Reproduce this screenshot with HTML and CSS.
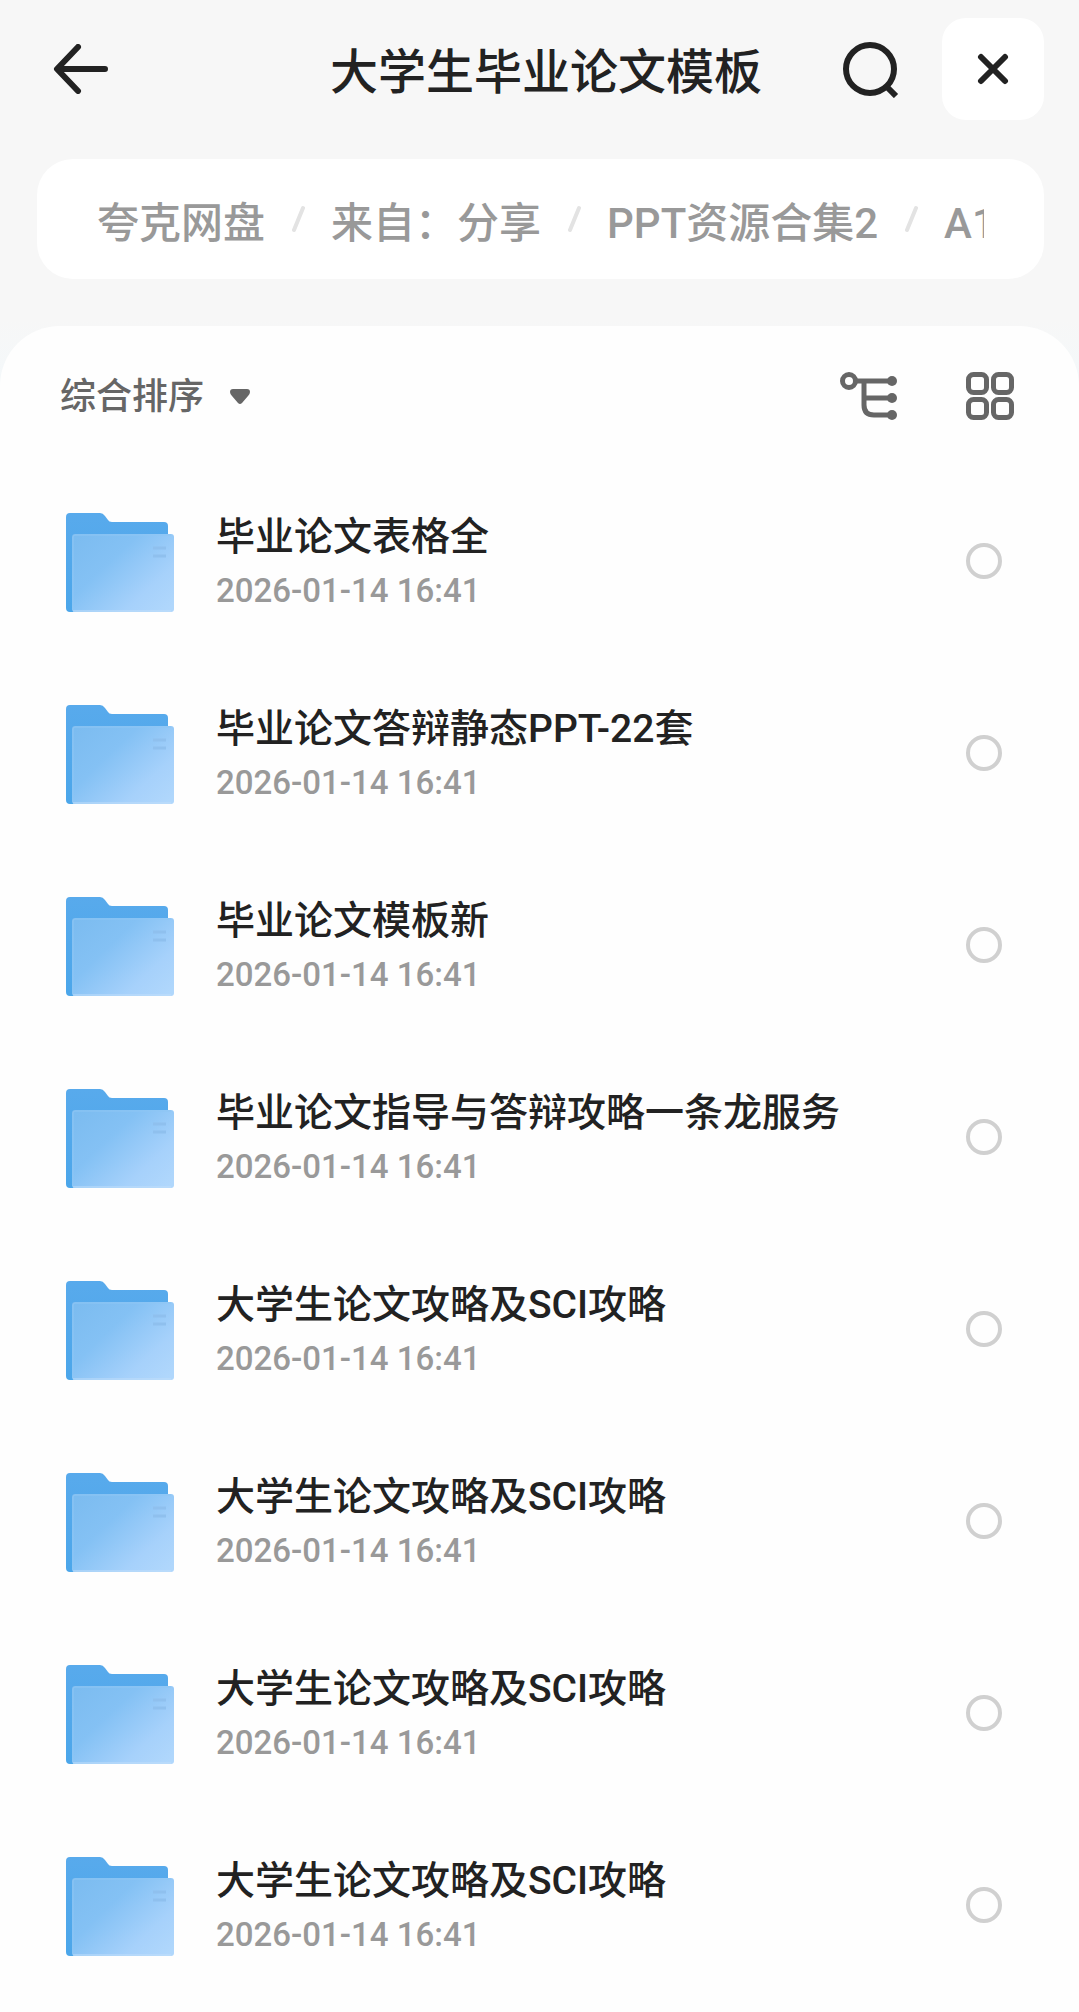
FILE: index.html
```html
<!DOCTYPE html>
<html lang="zh-CN">
<head>
    <meta charset="UTF-8">
    <meta name="viewport" content="width=device-width, initial-scale=1.0">
    <title>大学生毕业论文模板</title>
    <link rel="stylesheet" href="styles.css">
</head>
<body>
    <!-- shared icons -->
    <svg class="sprite" aria-hidden="true">
        <defs>
            <linearGradient id="back" x1="0" y1="0" x2="0" y2="1">
                <stop offset="0" stop-color="#58aaec"/>
                <stop offset="1" stop-color="#4ba6ea"/>
            </linearGradient>
            <linearGradient id="front" x1="0" y1="0.1" x2="1" y2="0.9">
                <stop offset="0" stop-color="#7cbcf0"/>
                <stop offset="0.35" stop-color="#84c1f4"/>
                <stop offset="0.75" stop-color="#a6d1fb"/>
                <stop offset="1" stop-color="#b0d7fc"/>
            </linearGradient>
        </defs>
        <symbol id="folder" viewBox="0 -2 108 101">
            <path fill="url(#back)" d="M4 0H34Q37 0 39 3L42 7Q43 9 46 9H98Q102 9 102 13V99H4Q0 99 0 95V4Q0 0 4 0Z"/>
            <rect x="6" y="21" width="102" height="78" rx="3" fill="url(#front)"/>
            <path d="M7 97V24Q7 22 9 22H105" fill="none" stroke="#8ec6f4" stroke-width="1"/>
            <path d="M7 98H105" stroke="#c2dffa" stroke-width="1"/>
            <path d="M87 35H100M87 43H100" stroke="#8fc0ee" stroke-width="3"/>
        </symbol>
        <symbol id="slash" viewBox="0 0 14 28">
            <path d="M12 3L3 25" stroke="#e3e3e3" stroke-width="4" stroke-linecap="round"/>
        </symbol>
    </svg>

    <header class="topbar">
        <button class="icon-btn back" aria-label="返回">
            <svg width="60" height="50" viewBox="-6 0 60 50" fill="none" stroke="#222" stroke-width="6" stroke-linecap="round" stroke-linejoin="round">
                <path d="M24 3L3 25L24 47M4 25H51"/>
            </svg>
        </button>
        <h1 class="title">大学生毕业论文模板</h1>
        <div class="actions">
            <button class="icon-btn" aria-label="搜索">
                <svg width="58" height="58" viewBox="0 0 58 58" fill="none" stroke="#222" stroke-width="6">
                    <circle cx="28" cy="29" r="24"/>
                    <path d="M44 46L54 56"/>
                </svg>
            </button>
            <button class="icon-btn close" aria-label="关闭">
                <svg width="32" height="32" viewBox="0 0 32 32" fill="none" stroke="#222" stroke-width="6" stroke-linecap="round">
                    <path d="M4 4L28 28M28 4L4 28"/>
                </svg>
            </button>
        </div>
    </header>

    <nav class="crumbs" aria-label="路径">
        <div class="crumbs-scroll">
            <a href="#">夸克网盘</a>
            <svg class="slash"><use href="#slash"/></svg>
            <a href="#">来自：分享</a>
            <svg class="slash"><use href="#slash"/></svg>
            <a href="#">PPT资源合集2</a>
            <svg class="slash"><use href="#slash"/></svg>
            <a href="#">A1</a>
        </div>
    </nav>

    <main class="panel">
        <div class="toolbar">
            <div class="sort">
                <select class="sort-select" aria-label="排序">
                    <option>综合排序</option>
                </select>
                <svg width="20" height="15" viewBox="0 0 20 15">
                    <path d="M3 0H17Q20 0 20 3Q20 5 18 7L12 14Q10 16 8 14L2 7Q0 5 0 3Q0 0 3 0Z" fill="#666"/>
                </svg>
            </div>
            <div class="views">
                <button class="icon-btn" aria-label="目录树">
                    <svg width="58" height="48" viewBox="0 0 58 48" fill="none" stroke="#666" stroke-width="5">
                        <circle cx="9" cy="9" r="6.5"/>
                        <path d="M17 9H52M24 9V33Q24 43 34 43H52M24 26H52"/>
                        <g fill="#666" stroke="none">
                            <circle cx="52" cy="9" r="5"/>
                            <circle cx="52" cy="26" r="5"/>
                            <circle cx="52" cy="43" r="5"/>
                        </g>
                    </svg>
                </button>
                <button class="icon-btn" aria-label="网格视图">
                    <svg width="48" height="48" viewBox="0 0 48 48" fill="none" stroke="#666" stroke-width="5">
                        <rect x="2.5" y="2.5" width="18" height="18" rx="5"/>
                        <rect x="27.5" y="2.5" width="18" height="18" rx="5"/>
                        <rect x="2.5" y="27.5" width="18" height="18" rx="5"/>
                        <rect x="27.5" y="27.5" width="18" height="18" rx="5"/>
                    </svg>
                </button>
            </div>
        </div>

        <ul class="files">
            <li class="file">
                <svg class="folder"><use href="#folder"/></svg>
                <label class="info" for="f1">
                    <span class="name">毕业论文表格全</span>
                    <span class="date">2026-01-14 16:41</span>
                </label>
                <input class="check" type="checkbox" id="f1">
            </li>
            <li class="file">
                <svg class="folder"><use href="#folder"/></svg>
                <label class="info" for="f2">
                    <span class="name">毕业论文答辩静态PPT-22套</span>
                    <span class="date">2026-01-14 16:41</span>
                </label>
                <input class="check" type="checkbox" id="f2">
            </li>
            <li class="file">
                <svg class="folder"><use href="#folder"/></svg>
                <label class="info" for="f3">
                    <span class="name">毕业论文模板新</span>
                    <span class="date">2026-01-14 16:41</span>
                </label>
                <input class="check" type="checkbox" id="f3">
            </li>
            <li class="file">
                <svg class="folder"><use href="#folder"/></svg>
                <label class="info" for="f4">
                    <span class="name">毕业论文指导与答辩攻略一条龙服务</span>
                    <span class="date">2026-01-14 16:41</span>
                </label>
                <input class="check" type="checkbox" id="f4">
            </li>
            <li class="file">
                <svg class="folder"><use href="#folder"/></svg>
                <label class="info" for="f5">
                    <span class="name">大学生论文攻略及SCI攻略</span>
                    <span class="date">2026-01-14 16:41</span>
                </label>
                <input class="check" type="checkbox" id="f5">
            </li>
            <li class="file">
                <svg class="folder"><use href="#folder"/></svg>
                <label class="info" for="f6">
                    <span class="name">大学生论文攻略及SCI攻略</span>
                    <span class="date">2026-01-14 16:41</span>
                </label>
                <input class="check" type="checkbox" id="f6">
            </li>
            <li class="file">
                <svg class="folder"><use href="#folder"/></svg>
                <label class="info" for="f7">
                    <span class="name">大学生论文攻略及SCI攻略</span>
                    <span class="date">2026-01-14 16:41</span>
                </label>
                <input class="check" type="checkbox" id="f7">
            </li>
            <li class="file">
                <svg class="folder"><use href="#folder"/></svg>
                <label class="info" for="f8">
                    <span class="name">大学生论文攻略及SCI攻略</span>
                    <span class="date">2026-01-14 16:41</span>
                </label>
                <input class="check" type="checkbox" id="f8">
            </li>
        </ul>
    </main>
</body>
</html>
```
FILE: styles.css
```css
*{
    box-sizing: border-box;
    margin: 0;
    padding: 0;
}
body{
    display: flex;
    flex-direction: column;
    min-height: 100vh;
    font-family: Roboto, "Noto Sans CJK SC", sans-serif;
    font-weight: 500;
    color: #222;
    background: linear-gradient(#f7f7f7 320px, #f4f8fa 380px);
}
.sprite{
    position: absolute;
    width: 0;
    height: 0;
}
svg{
    display: block;
    flex-shrink: 0;
}
.icon-btn{
    border: none;
    background: none;
    cursor: pointer;
}

/* top bar */
.topbar{
    display: grid;
    grid-template-columns: 1fr auto 1fr;
    align-items: center;
    padding: 18px 35px 0 48px;
}
.back{
    justify-self: start;
}
.title{
    padding-top: 8px;
    font-size: 48px;
    line-height: 72px;
    font-weight: 500;
}
.actions{
    display: flex;
    justify-content: flex-end;
    align-items: center;
    gap: 42px;
}
.close{
    display: flex;
    align-items: center;
    justify-content: center;
    width: 102px;
    height: 102px;
    border-radius: 24px;
    background: #fff;
}

/* breadcrumb */
.crumbs{
    margin: 39px 35px 0 37px;
    padding: 24px 60px;
    border-radius: 36px;
    background: #fff;
}
.crumbs-scroll{
    display: flex;
    align-items: center;
    overflow: hidden;
    white-space: nowrap;
    font-size: 42px;
    line-height: 62px;
}
.crumbs-scroll a{
    padding-top: 10px;
    color: #999;
    text-decoration: none;
}
.slash{
    width: 14px;
    height: 28px;
    margin: 0 26px;
}

/* list panel */
.panel{
    flex: 1;
    margin-top: 47px;
    border-radius: 60px 60px 0 0;
    background: #fefefe;
}
.toolbar{
    display: flex;
    justify-content: space-between;
    align-items: center;
    height: 139px;
    padding: 0 65px 0 60px;
}
.sort{
    display: flex;
    align-items: center;
    gap: 25px;
    padding-top: 2px;
}
.sort-select{
    appearance: none;
    border: none;
    background: none;
    font: inherit;
    font-size: 36px;
    line-height: 54px;
    color: #666;
}
.views{
    display: flex;
    gap: 68px;
}
.files{
    list-style: none;
}
.file{
    display: flex;
    align-items: center;
    height: 192px;
    padding: 0 77px 0 66px;
}
.folder{
    width: 108px;
    height: 101px;
}
.info{
    display: flex;
    flex: 1;
    flex-direction: column;
    margin-left: 42px;
}
.name{
    font-size: 39px;
    line-height: 60px;
}
.date{
    font-size: 33px;
    line-height: 48px;
    color: #999;
}
.check{
    appearance: none;
    width: 36px;
    height: 36px;
    border: 4px solid #d0d0d0;
    border-radius: 50%;
}
.check:checked{
    border-color: #58aaec;
    background: #58aaec;
}
```
